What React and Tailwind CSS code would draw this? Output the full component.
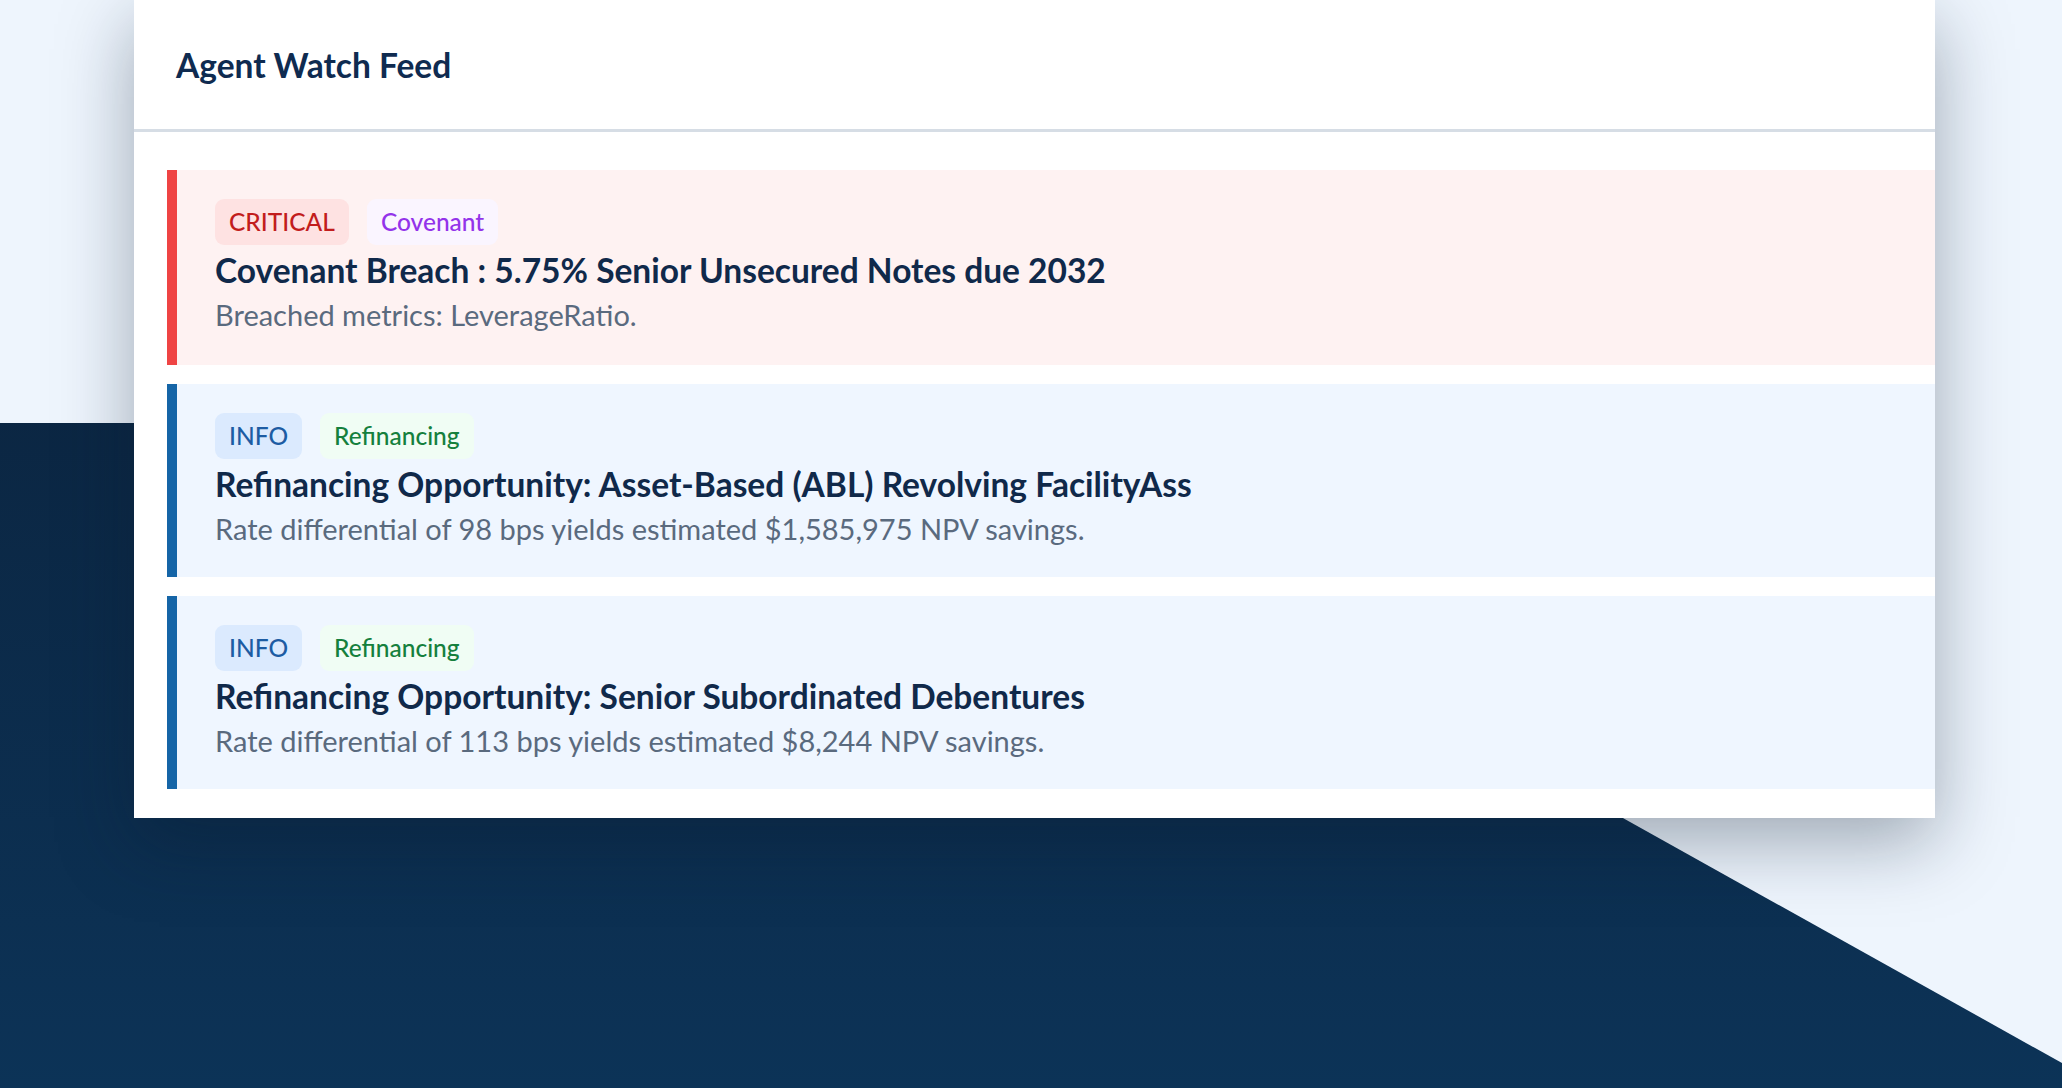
import React from "react";

const alerts = [
  {
    severity: "CRITICAL",
    tag: "Covenant",
    title: "Covenant Breach : 5.75% Senior Unsecured Notes due 2032",
    detail: "Breached metrics: LeverageRatio.",
  },
  {
    severity: "INFO",
    tag: "Refinancing",
    title: "Refinancing Opportunity: Asset-Based (ABL) Revolving FacilityAss",
    detail: "Rate differential of 98 bps yields estimated $1,585,975 NPV savings.",
  },
  {
    severity: "INFO",
    tag: "Refinancing",
    title: "Refinancing Opportunity: Senior Subordinated Debentures",
    detail: "Rate differential of 113 bps yields estimated $8,244 NPV savings.",
  },
];

const severityStyles = {
  CRITICAL: {
    row: "bg-[#fef2f2] border-[#ef4444] pb-[33px]",
    badge: "bg-[#fee2e2] text-[#c21d1d]",
  },
  INFO: {
    row: "bg-[#eff6ff] border-[#1565a7] pb-[31px]",
    badge: "bg-[#dbeafe] text-[#1d5ca3]",
  },
};

const tagStyles = {
  Covenant: "bg-[#faf5ff] text-[#9333ea]",
  Refinancing: "bg-[#f0fdf4] text-[#15803d]",
};

function Badge({ className, children }) {
  return (
    <span className={`flex h-[46px] items-center rounded-[9px] px-[14px] text-[24.5px] font-medium leading-none ${className}`}>
      {children}
    </span>
  );
}

function AlertRow({ alert }) {
  const s = severityStyles[alert.severity];
  return (
    <div className={`border-l-[10px] pl-[38px] pt-[29px] ${s.row}`}>
      <div className="flex gap-[18px]">
        <Badge className={s.badge}>{alert.severity}</Badge>
        <Badge className={tagStyles[alert.tag]}>{alert.tag}</Badge>
      </div>
      <h3 className="mt-[6px] text-[33.5px] font-bold leading-[38px] text-[#10294a]">{alert.title}</h3>
      <p className="mt-[9px] text-[29px] leading-[34px] text-[#5a6a7e]">{alert.detail}</p>
    </div>
  );
}

export default function App() {
  return (
    <div className="relative h-[1088px] w-[2062px] overflow-hidden bg-[#eef5fd] font-['Lato',sans-serif]">
      {/* dark backdrop shape */}
      <div className="absolute inset-0 bg-gradient-to-b from-[#0a1f37] to-[#0c3357] [clip-path:polygon(0_423px,915px_423px,2062px_1063px,2062px_100%,0_100%)]" />

      {/* Feed card */}
      <div className="relative z-10 ml-[134px] w-[1801px] bg-white shadow-[0_24px_70px_rgba(10,25,45,0.35)]">
        <div className="flex h-[132px] items-center border-b-[3px] border-[#d6dde5] pl-[42px]">
          <h2 className="text-[33.5px] font-bold leading-[38px] text-[#0f2b50]">Agent Watch Feed</h2>
        </div>
        <div className="flex flex-col gap-[19px] pl-[33px] pt-[38px] pb-[29px]">
          {alerts.map((a, i) => (
            <AlertRow key={i} alert={a} />
          ))}
        </div>
      </div>
    </div>
  );
}
